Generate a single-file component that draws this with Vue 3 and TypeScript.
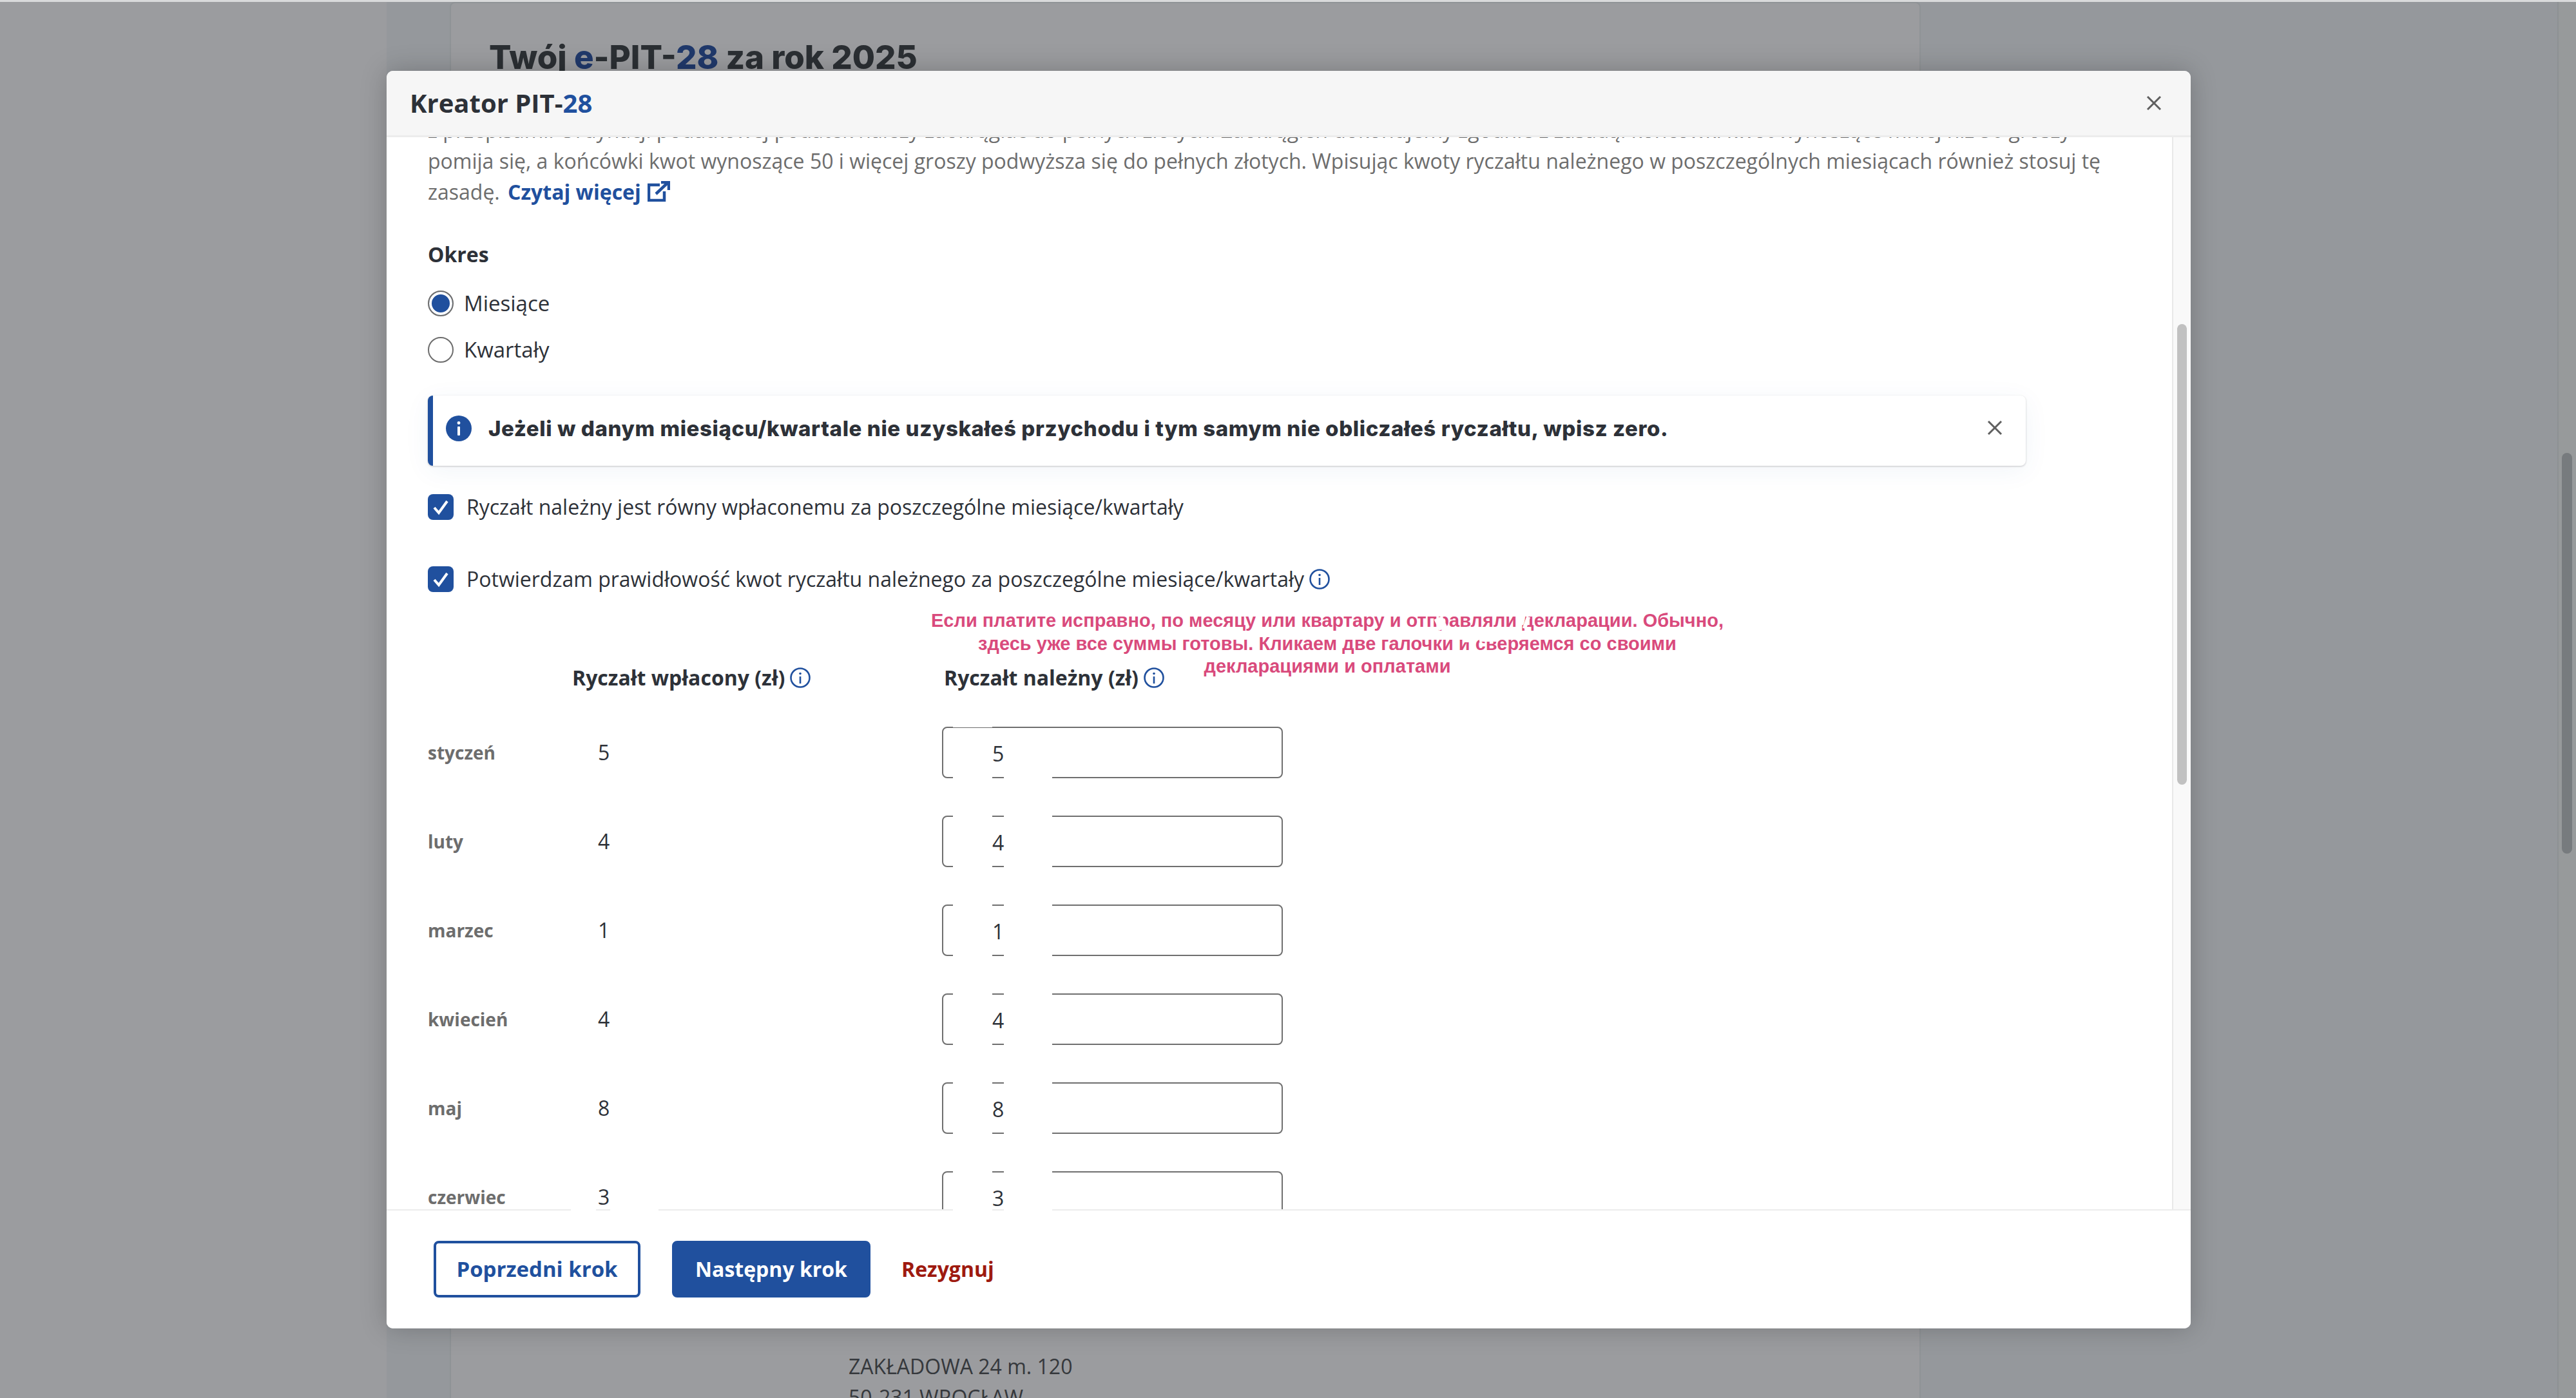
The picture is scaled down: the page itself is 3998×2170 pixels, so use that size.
<script setup lang="ts">
// Kreator PIT-28: okno kreatora nad przyciemnioną stroną e-PIT
interface MonthRow {
  name: string;
  paid: string;
}

const months: MonthRow[] = [
  { name: 'styczeń', paid: '5' },
  { name: 'luty', paid: '4' },
  { name: 'marzec', paid: '1' },
  { name: 'kwiecień', paid: '4' },
  { name: 'maj', paid: '8' },
  { name: 'czerwiec', paid: '3' },
];
</script>

<template>
  <div class="page">
    <div class="side"></div>
    <main class="main">
      <div class="panel">
        <h1 class="page-title">Twój <span class="blue">e</span>-PIT-<span class="blue">28</span> za rok 2025</h1>
        <div class="address">
          <div>ZAKŁADOWA 24 m. 120</div>
          <div>50-231 WROCŁAW</div>
        </div>
      </div>
    </main>
    <div class="page-scroll"><div class="page-thumb"></div></div>

    <section class="modal">
      <header class="modal-head">
        <h2 class="modal-title">Kreator PIT-<span class="accent">28</span></h2>
        <svg class="close" viewBox="0 0 24 24"><path d="M2 2 22 22M22 2 2 22" /></svg>
      </header>

      <div class="modal-middle">
        <div class="modal-body">
          <p class="intro">
            z przepisami. Ordynacji podatkowej podatek należy zaokrąglać do pełnych złotych. Zaokrągleń dokonujemy zgodnie z zasadą: końcówki kwot wynoszące mniej niż 50 groszy<br />
            pomija się, a końcówki kwot wynoszące 50 i więcej groszy podwyższa się do pełnych złotych. Wpisując kwoty ryczałtu należnego w poszczególnych miesiącach również stosuj tę<br />
            zasadę. <a class="more">Czytaj więcej
              <svg class="ext" viewBox="0 0 35 32">
                <path d="M19 6H2v24h24V16" />
                <path d="M13 20 31 3M21 2h12v12" />
              </svg>
            </a>
          </p>

          <div class="label-strong">Okres</div>
          <div class="radios">
            <label class="radio-row"><span class="radio on"></span>Miesiące</label>
            <label class="radio-row"><span class="radio"></span>Kwartały</label>
          </div>

          <div class="alert">
            <svg class="alert-icon" viewBox="0 0 40 40">
              <circle cx="20" cy="20" r="20" fill="#20509e" />
              <circle cx="20" cy="11.5" r="2.4" fill="#fff" />
              <rect x="18" y="17" width="4" height="14" rx="1" fill="#fff" />
            </svg>
            <div class="alert-text">Jeżeli w danym miesiącu/kwartale nie uzyskałeś przychodu i tym samym nie obliczałeś ryczałtu, wpisz zero.</div>
            <svg class="alert-close" viewBox="0 0 24 24"><path d="M2 2 22 22M22 2 2 22" /></svg>
          </div>

          <label class="check-row">
            <svg class="check" viewBox="0 0 40 40">
              <rect width="40" height="40" rx="8" fill="#20509e" />
              <path d="M10 21 17 29 30 11" fill="none" stroke="#fff" stroke-width="4" />
            </svg>
            Ryczałt należny jest równy wpłaconemu za poszczególne miesiące/kwartały
          </label>
          <label class="check-row second">
            <svg class="check" viewBox="0 0 40 40">
              <rect width="40" height="40" rx="8" fill="#20509e" />
              <path d="M10 21 17 29 30 11" fill="none" stroke="#fff" stroke-width="4" />
            </svg>
            Potwierdzam prawidłowość kwot ryczałtu należnego za poszczególne miesiące/kwartały
            <svg class="info" viewBox="0 0 32 32">
              <circle cx="16" cy="16" r="14.5" />
              <circle class="dot" cx="16" cy="9.5" r="1.8" />
              <path d="M16 14v11" />
            </svg>
          </label>

          <div class="table-head">
            <div class="head-paid">
              Ryczałt wpłacony (zł)
              <svg class="info" viewBox="0 0 32 32">
                <circle cx="16" cy="16" r="14.5" />
                <circle class="dot" cx="16" cy="9.5" r="1.8" />
                <path d="M16 14v11" />
              </svg>
            </div>
            <div class="head-due">
              Ryczałt należny (zł)
              <svg class="info" viewBox="0 0 32 32">
                <circle cx="16" cy="16" r="14.5" />
                <circle class="dot" cx="16" cy="9.5" r="1.8" />
                <path d="M16 14v11" />
              </svg>
            </div>
          </div>

          <div class="rows">
            <div v-for="(m, i) in months" :key="m.name" class="row">
              <div class="month">{{ m.name }}</div>
              <div class="paid">{{ m.paid }}</div>
              <div class="due">
                <input class="due-input" :value="m.paid" readonly />
                <span class="erase erase-a" :class="{ thin: i === 0 }"></span>
                <span class="erase erase-b" :class="{ open: i === 0 }"></span>
              </div>
            </div>
          </div>

          <div class="note">
            Если платите исправно, по месяцу или квартару и отправляли декларации. Обычно,<br />
            здесь уже все суммы готовы. Кликаем две галочки и сверяемся со своими<br />
            декларациями и оплатами
            <span class="smudge s1"></span>
            <span class="smudge s2"></span>
            <span class="smudge s3"></span>
            <span class="smudge s4"></span>
          </div>
        </div>
        <div class="modal-scroll"><div class="modal-thumb"></div></div>
      </div>

      <footer class="modal-foot">
        <span class="line-gap g1"></span>
        <span class="line-gap g2"></span>
        <span class="line-gap g3"></span>
        <span class="line-gap g4"></span>
        <button class="btn btn-outline">Poprzedni krok</button>
        <button class="btn btn-solid">Następny krok</button>
        <a class="quit">Rezygnuj</a>
      </footer>
    </section>
  </div>
</template>

<style>
html,
body {
  margin: 0;
  background: #9b9c9f;
}
</style>

<style scoped>
* {
  box-sizing: border-box;
}
.page {
  position: relative;
  width: 3998px;
  height: 2170px;
  overflow: hidden;
  display: flex;
  border-top: 3px solid #d9dadb;
  font-family: 'Open Sans', sans-serif;
  font-size: 32px;
  line-height: 48px;
  color: #2d3138;
}
.side {
  width: 600px;
  background: #9b9c9f;
}
.main {
  flex: 1;
  background: #95989c;
  padding-left: 98px;
}
.panel {
  width: 2283px;
  height: 100%;
  background: #9b9c9f;
  border: 2px solid #8f9396;
  border-bottom: none;
  border-radius: 8px 8px 0 0;
  padding-left: 59px;
}
.page-title {
  margin: 54px 0 0;
  font-family: Inter, 'Open Sans', sans-serif;
  font-size: 51px;
  line-height: 60px;
  font-weight: 800;
  color: #2b2f33;
}
.blue {
  color: #20396b;
}
.address {
  margin: 1978px 0 0 558px;
  color: #35383c;
}
.page-scroll {
  width: 29px;
  background: #979a9b;
  border-left: 2px solid #8d9194;
  padding: 700px 6px 0 5px;
}
.page-thumb {
  height: 622px;
  border-radius: 8px;
  background: #777b7e;
}

.modal {
  position: absolute;
  left: 600px;
  top: 107px;
  width: 2800px;
  height: 1952px;
  display: flex;
  flex-direction: column;
  background: #fff;
  border-radius: 10px;
  overflow: hidden;
  box-shadow: 0 0 40px rgba(0, 0, 0, 0.22);
}
.modal-head {
  height: 103px;
  flex: none;
  display: flex;
  align-items: center;
  justify-content: space-between;
  padding: 0 45px 0 36px;
  background: #f6f6f6;
  border-bottom: 3px solid #ececec;
}
.modal-title {
  margin: 0;
  font-size: 40px;
  line-height: 48px;
  font-weight: 700;
  color: #2d3138;
}
.accent {
  color: #20509e;
}
.close,
.alert-close {
  width: 24px;
  height: 24px;
  fill: none;
  stroke: #5f5f5f;
  stroke-width: 3;
}

.modal-middle {
  flex: 1;
  min-height: 0;
  display: flex;
}
.modal-body {
  position: relative;
  flex: 1;
  min-width: 0;
  overflow: hidden;
  padding-left: 64px;
}
.intro {
  margin: -35px 0 0;
  color: #6d6d6d;
  white-space: nowrap;
}
.more {
  margin-left: 4px;
  font-weight: 700;
  color: #20509e;
}
.ext {
  width: 35px;
  height: 32px;
  margin-left: 2px;
  vertical-align: -3px;
  fill: none;
  stroke: #20509e;
  stroke-width: 4.5;
}
.label-strong {
  margin-top: 49px;
  font-weight: 700;
}
.radios {
  margin-top: 32px;
  display: flex;
  flex-direction: column;
  gap: 32px;
}
.radio-row {
  display: flex;
  align-items: center;
  gap: 16px;
  height: 40px;
  font-size: 33px;
}
.radio {
  width: 40px;
  height: 40px;
  border-radius: 50%;
  border: 2px solid #6d6d6d;
  background: #fff;
}
.radio.on {
  border-width: 2px;
  box-shadow: inset 0 0 0 4px #fff, inset 0 0 0 20px #20509e;
}
.alert {
  margin-top: 51px;
  width: 2480px;
  height: 109px;
  display: flex;
  align-items: flex-start;
  padding: 31px 36px 0 20px;
  background: #fff;
  border-left: 8px solid #20509e;
  border-radius: 8px;
  box-shadow: 0 1px 3px rgba(0, 0, 0, 0.22), 0 8px 40px rgba(32, 80, 158, 0.06);
}
.alert-icon {
  flex: none;
  width: 40px;
  height: 40px;
}
.alert-text {
  flex: 1;
  margin-left: 26px;
  margin-top: -4px;
  font-family: Inter, 'Open Sans', sans-serif;
  font-size: 33px;
  font-weight: 800;
  letter-spacing: 0.6px;
  white-space: nowrap;
}
.alert-close {
  margin-top: 7px;
}
.check-row {
  margin-top: 44px;
  display: flex;
  align-items: center;
  height: 40px;
  white-space: nowrap;
}
.check-row.second {
  margin-top: 72px;
}
.check {
  width: 40px;
  height: 40px;
  margin-right: 20px;
  flex: none;
}
.info {
  width: 32px;
  height: 32px;
  margin-left: 8px;
  flex: none;
  fill: none;
  stroke: #20509e;
  stroke-width: 2.6;
}
.info .dot {
  fill: #20509e;
  stroke: none;
}
.table-head {
  margin-top: 109px;
  display: flex;
  padding-left: 224px;
  font-weight: 700;
}
.head-paid {
  width: 577px;
  display: flex;
  align-items: center;
}
.head-due {
  display: flex;
  align-items: center;
}
.rows {
  margin-top: 52px;
  display: flex;
  flex-direction: column;
  gap: 58px;
}
.row {
  display: grid;
  grid-template-columns: 264px 534px 529px;
  align-items: center;
  height: 80px;
  flex: none;
}
.month {
  font-size: 28px;
  font-weight: 700;
  color: #6d6d6d;
}
.due {
  position: relative;
  height: 80px;
}
.due-input {
  width: 100%;
  height: 100%;
  padding: 2px 0 0 76px;
  border: 2px solid #6f6f6f;
  border-radius: 8px;
  outline: none;
  background: #fff;
  font: inherit;
  color: #2d3138;
}
.erase {
  position: absolute;
  top: 0;
  bottom: 0;
  border-top: 2px solid #fff;
  border-bottom: 2px solid #fff;
}
.erase-a {
  left: 17px;
  width: 61px;
}
.erase-b {
  left: 96px;
  width: 75px;
}
.erase-a.thin {
  border-top-width: 1px;
}
.erase-b.open {
  border-top: none;
}
.note {
  position: absolute;
  left: 810px;
  top: 733px;
  width: 1300px;
  font-family: 'Liberation Sans', sans-serif;
  font-size: 29px;
  line-height: 35.5px;
  font-weight: 700;
  color: #d94a7c;
  text-align: center;
  white-space: nowrap;
}
.smudge {
  position: absolute;
  background: #fff;
}
.s1 {
  left: 819px;
  top: 12px;
  width: 14px;
  height: 19px;
  transform: rotate(-25deg);
}
.s2 {
  left: 956px;
  top: 11px;
  width: 6px;
  height: 19px;
  transform: rotate(20deg);
}
.s3 {
  left: 860px;
  top: 42px;
  width: 11px;
  height: 9px;
}
.s4 {
  left: 886px;
  top: 42px;
  width: 28px;
  height: 8px;
}
.modal-scroll {
  flex: none;
  width: 29px;
  background: #f9f9f9;
  border-left: 2px solid #e8e8e8;
  padding: 290px 6px 0 6px;
}
.modal-thumb {
  height: 715px;
  border-radius: 8px;
  background: #c1c1c1;
}
.modal-foot {
  position: relative;
  flex: none;
  height: 185px;
  display: flex;
  align-items: flex-start;
  padding: 47px 0 0 73px;
  border-top: 2px solid #ececec;
  background: #fff;
}
.line-gap {
  position: absolute;
  top: -2px;
  height: 2px;
  background: #fff;
}
.g1 {
  left: 286px;
  width: 39px;
}
.g2 {
  left: 347px;
  width: 75px;
}
.g3 {
  left: 879px;
  width: 61px;
}
.g4 {
  left: 958px;
  width: 75px;
}
.btn {
  height: 88px;
  border-radius: 8px;
  font: inherit;
  font-weight: 700;
  border: 4px solid #20509e;
}
.btn-outline {
  width: 321px;
  background: #fff;
  color: #20509e;
  font-size: 33px;
}
.btn-solid {
  width: 308px;
  margin-left: 49px;
  background: #20509e;
  color: #fff;
}
.quit {
  margin-left: 48px;
  line-height: 88px;
  font-weight: 700;
  color: #9e1a0f;
}
</style>
